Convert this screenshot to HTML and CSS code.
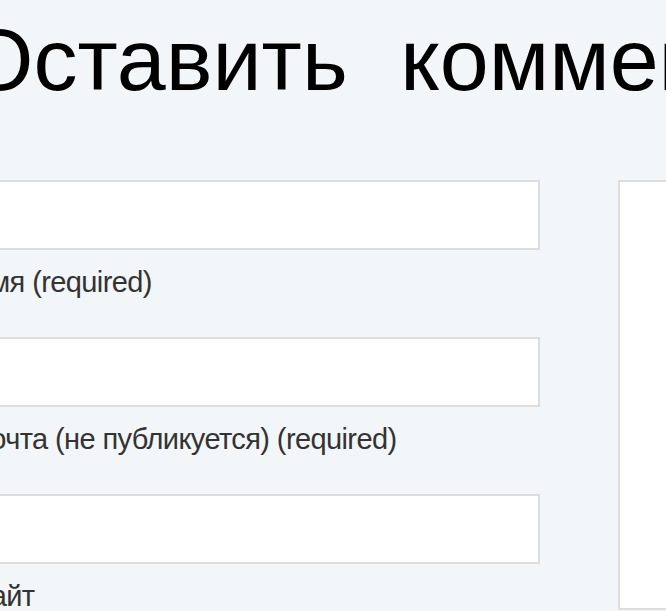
FILE: index.html
```html
<!DOCTYPE html>
<html lang="ru">
<head>
<meta charset="utf-8">
<title>Оставить комментарий</title>
<link rel="stylesheet" href="styles.css">
</head>
<body>
<section class="reply">
  <h3 class="reply-title">Оставить комментарий</h3>
  <form class="reply-form">
    <div class="fields">
      <p class="field">
        <input class="field-input" type="text" name="author">
        <label class="field-label">Имя (required)</label>
      </p>
      <p class="field">
        <input class="field-input" type="email" name="email">
        <label class="field-label">Почта (не публикуется) (required)</label>
      </p>
      <p class="field">
        <input class="field-input" type="url" name="url">
        <label class="field-label">Сайт</label>
      </p>
    </div>
    <textarea class="comment" name="comment"></textarea>
  </form>
</section>
</body>
</html>
```

FILE: styles.css
```css
html, body {
  margin: 0;
  padding: 0;
  background: #f3f6f8;
  overflow: hidden;
}

.reply {
  margin-left: -35px;
  width: 1200px;
  font-family: "Liberation Sans", Arial, sans-serif;
}

.reply-title {
  margin: 0;
  padding-top: 10px;
  height: 180px;
  box-sizing: border-box;
  font-size: 88px;
  font-weight: 400;
  line-height: 100px;
  word-spacing: 28px;
  color: #000;
  white-space: nowrap;
}

.reply-form {
  display: flex;
  gap: 78px;
  align-items: flex-start;
}

.fields {
  flex: none;
  width: 575px;
}

.field {
  margin: 0 0 38px;
}

.field-input {
  display: block;
  width: 100%;
  height: 70px;
  box-sizing: border-box;
  margin: 0;
  border: 2px solid #dddddd;
  background: #fff;
  outline: none;
}

.field-label {
  display: block;
  margin-top: 15px;
  padding-left: 5px;
  font-size: 29px;
  line-height: 34px;
  letter-spacing: -0.6px;
  color: #333;
  white-space: nowrap;
}

.comment {
  flex: none;
  display: block;
  width: 400px;
  height: 430px;
  box-sizing: border-box;
  margin: 0;
  border: 2px solid #dddddd;
  background: #fff;
  resize: none;
  outline: none;
}
```
